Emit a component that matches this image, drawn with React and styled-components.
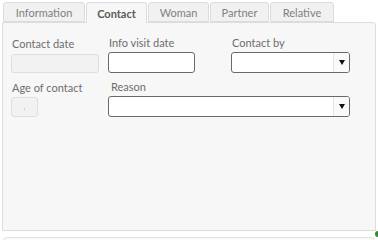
import React from 'react';
import styled, { createGlobalStyle } from 'styled-components';

const GlobalStyle = createGlobalStyle`
  body {
    margin: 0;
    background: #ffffff;
    font-family: Lato, 'Open Sans', sans-serif;
  }
`;

const Page = styled.div`
  position: relative;
  width: 378px;
  height: 240px;
  overflow: hidden;
  padding-top: 2px;
  box-sizing: border-box;
`;

const TabBar = styled.div`
  display: flex;
  gap: 1px;
  padding-left: 3px;
  height: 20px;
  position: relative;
  z-index: 1;
`;

const Tab = styled.div`
  display: flex;
  align-items: center;
  justify-content: center;
  box-sizing: border-box;
  width: ${(p) => p.$w}px;
  height: ${(p) => (p.$active ? 21 : 20)}px;
  border: 1px solid #dcdcdc;
  border-bottom: ${(p) => (p.$active ? 'none' : '1px solid #dcdcdc')};
  border-radius: 3px 3px 0 0;
  background: ${(p) => (p.$active ? '#f7f7f7' : '#f1f1f1')};
  color: ${(p) => (p.$active ? '#5a5a5a' : '#808080')};
  font-size: 11px;
  font-weight: ${(p) => (p.$active ? 700 : 400)};
`;

const Panel = styled.div`
  box-sizing: border-box;
  margin-left: 2px;
  width: 374px;
  height: 209px;
  border: 1px solid #dcdcdc;
  border-radius: 0 3px 0 0;
  background: #f7f7f7;
  padding: 13px 0 0 8px;
  display: flex;
  flex-direction: column;
  gap: 7px;
`;

const Row = styled.div`
  display: flex;
  align-items: center;
`;

const Field = styled.div`
  display: flex;
  flex-direction: column;
  gap: ${(p) => p.$gap ?? 3}px;
  width: ${(p) => p.$w}px;
`;

const Label = styled.div`
  font-size: 11px;
  line-height: 13px;
  color: #6e6e6e;
  padding-left: ${(p) => p.$indent ?? 1}px;
`;

const Box = styled.div`
  box-sizing: border-box;
  width: ${(p) => p.$w}px;
  height: ${(p) => p.$h}px;
  border-radius: 3px;
  border: 1px solid ${(p) => (p.$disabled ? '#dedede' : '#6a6a6a')};
  background: ${(p) => (p.$disabled ? '#f2f2f2' : '#ffffff')};
  display: flex;
  align-items: center;
  justify-content: center;
`;

const Select = styled(Box)`
  justify-content: flex-end;
`;

const ArrowCell = styled.div`
  width: 15px;
  height: 100%;
  border-left: 1px solid #e4e4e4;
  background: #fafafa;
  display: flex;
  align-items: center;
  justify-content: center;
  border-radius: 0 2px 2px 0;
`;

const Arrow = styled.div`
  width: 0;
  height: 0;
  border-left: 3px solid transparent;
  border-right: 3px solid transparent;
  border-top: 5px solid #111;
`;

const Dot = styled.span`
  width: 1px;
  height: 2px;
  background: #e8c9a0;
  margin-top: 4px;
`;

const Footer = styled.div`
  box-sizing: border-box;
  margin: 6px 0 0 3px;
  width: 372px;
  height: 20px;
  border: 1px solid #e0e0e0;
  border-radius: 4px 4px 0 0;
  background: #fbfbfb;
`;

const Status = styled.div`
  position: absolute;
  right: -3px;
  top: 231px;
  width: 6px;
  height: 6px;
  border-radius: 50%;
  background: #2e8b2e;
`;

const DropDown = ({ w }) => (
  <Select $w={w} $h={21}>
    <ArrowCell>
      <Arrow />
    </ArrowCell>
  </Select>
);

export default function App() {
  const tabs = [
    ['Information', 82],
    ['Contact', 61],
    ['Woman', 61],
    ['Partner', 59],
    ['Relative', 64],
  ];
  return (
    <Page>
      <GlobalStyle />
      <TabBar>
        {tabs.map(([t, w]) => (
          <Tab key={t} $w={w} $active={t === 'Contact'}>
            {t}
          </Tab>
        ))}
      </TabBar>
      <Panel>
        <Row>
          <Field $w={97} $gap={4}>
            <Label>Contact date</Label>
            <Box $w={88} $h={19} $disabled />
          </Field>
          <Field $w={123}>
            <Label>Info visit date</Label>
            <Box $w={87} $h={21} />
          </Field>
          <Field $w={120}>
            <Label>Contact by</Label>
            <DropDown w={119} />
          </Field>
        </Row>
        <Row>
          <Field $w={97}>
            <Label>Age of contact</Label>
            <Box $w={27} $h={20} $disabled>
              <Dot />
            </Box>
          </Field>
          <Field $w={242}>
            <Label $indent={3}>Reason</Label>
            <DropDown w={242} />
          </Field>
        </Row>
      </Panel>
      <Footer />
      <Status />
    </Page>
  );
}
